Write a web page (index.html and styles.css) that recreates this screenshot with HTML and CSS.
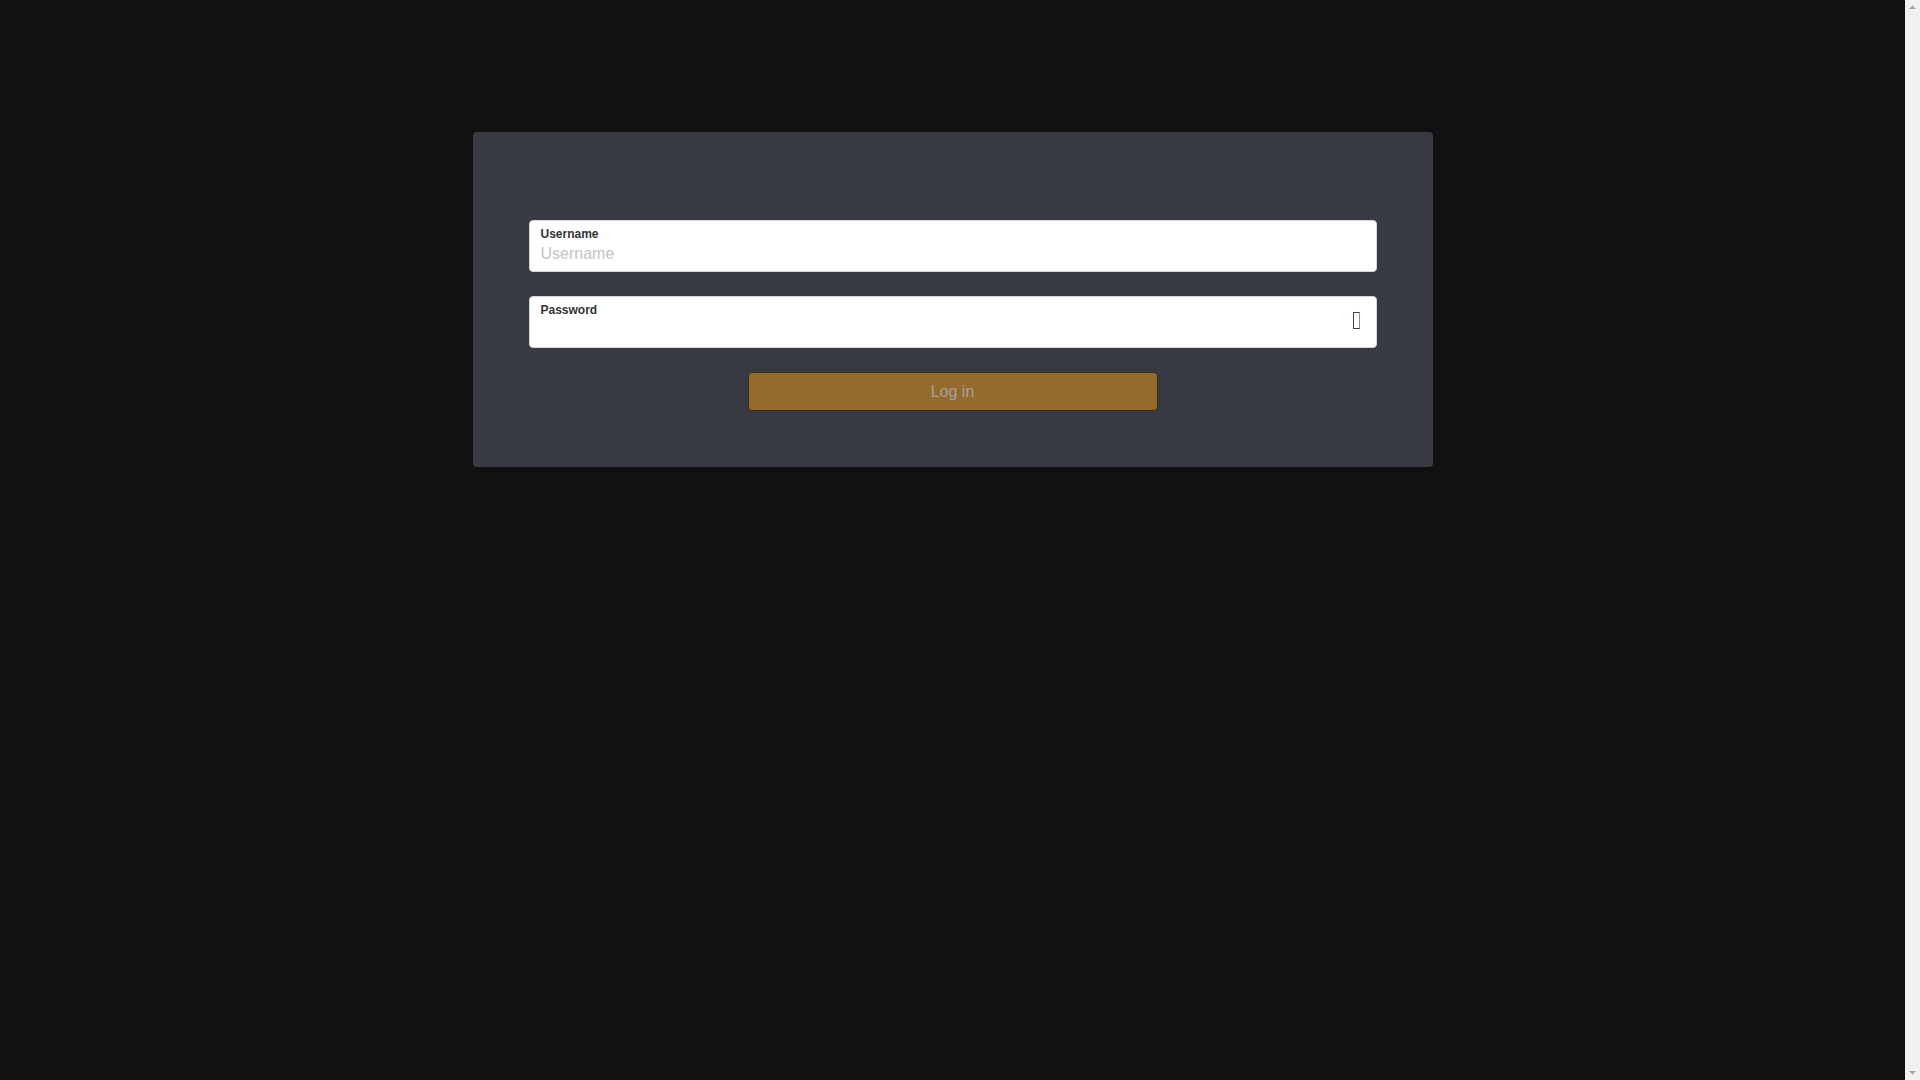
FILE: index.html
```html
<!DOCTYPE html>
<html lang="en">
<head>
<meta charset="utf-8">
<title>Log in</title>
<link rel="stylesheet" href="styles.css">
</head>
<body>
<div class="viewport">
  <main class="page">
    <form class="card">
      <div class="field">
        <label class="field-label" for="username">Username</label>
        <input class="field-input" id="username" type="text" placeholder="Username">
      </div>
      <div class="field field-password">
        <div class="field-main">
          <label class="field-label" for="password">Password</label>
          <input class="field-input" id="password" type="password">
        </div>
        <span class="tofu" aria-hidden="true"></span>
      </div>
      <button class="btn" type="button" disabled>Log in</button>
    </form>
  </main>
  <div class="scrollbar" aria-hidden="true">
    <svg class="arrow" width="15" height="15" viewBox="0 0 15 15"><path d="M4 9 L7.5 5.5 L11 9 Z" fill="#a3a3a3"/></svg>
    <svg class="arrow" width="15" height="15" viewBox="0 0 15 15"><path d="M4 6 L7.5 9.5 L11 6 Z" fill="#a3a3a3"/></svg>
  </div>
</div>
</body>
</html>
```

FILE: styles.css
```css
html, body {
  height: 100%;
  overflow: hidden;
}
body {
  margin: 0;
  background: #111111;
  font-family: "Liberation Sans", Arial, sans-serif;
}
.viewport {
  display: flex;
  height: 100vh;
}
.page {
  flex: 1;
  padding-top: 132px;
}
.scrollbar {
  width: 15px;
  flex: none;
  background: #f1f1f1;
  display: flex;
  flex-direction: column;
  justify-content: space-between;
}
.arrow {
  display: block;
}
.card {
  box-sizing: border-box;
  width: 960px;
  margin: 0 auto;
  padding: 88px 56px 56px;
  background: #373a43;
  border-radius: 4px;
  display: flex;
  flex-direction: column;
}
.field {
  box-sizing: border-box;
  height: 52px;
  background: #ffffff;
  border: 1px solid #d6d6d6;
  border-radius: 4px;
  padding: 6px 12px 8px 11px;
  display: flex;
  flex-direction: column;
}
.field + .field {
  margin-top: 24px;
}
.field-password {
  flex-direction: row;
  align-items: center;
  padding-right: 16px;
}
.field-main {
  flex: 1;
  display: flex;
  flex-direction: column;
  align-self: stretch;
}
.field-label {
  display: block;
  font-size: 12px;
  line-height: 14px;
  font-weight: bold;
  color: #333333;
}
.field-input {
  margin: 4px 0 0;
  padding: 0;
  border: 0;
  outline: none;
  font-family: "Liberation Sans", Arial, sans-serif;
  font-size: 16px;
  line-height: 18px;
  height: 18px;
  color: #333333;
  background: transparent;
}
.field-input::placeholder {
  color: #c4c4c4;
}
.tofu {
  box-sizing: border-box;
  width: 7px;
  height: 17px;
  border: 1px solid #4a3a3a;
  border-right-color: #9a8a8a;
  margin-top: -1px;
}
.btn {
  box-sizing: border-box;
  width: 410px;
  height: 39px;
  margin: 24px auto 0;
  background: #956b2b;
  border: 1px solid #3a2b1c;
  border-radius: 4px;
  color: #a3a3a3;
  font-family: "Liberation Sans", Arial, sans-serif;
  font-size: 16px;
  padding: 0;
}
```
